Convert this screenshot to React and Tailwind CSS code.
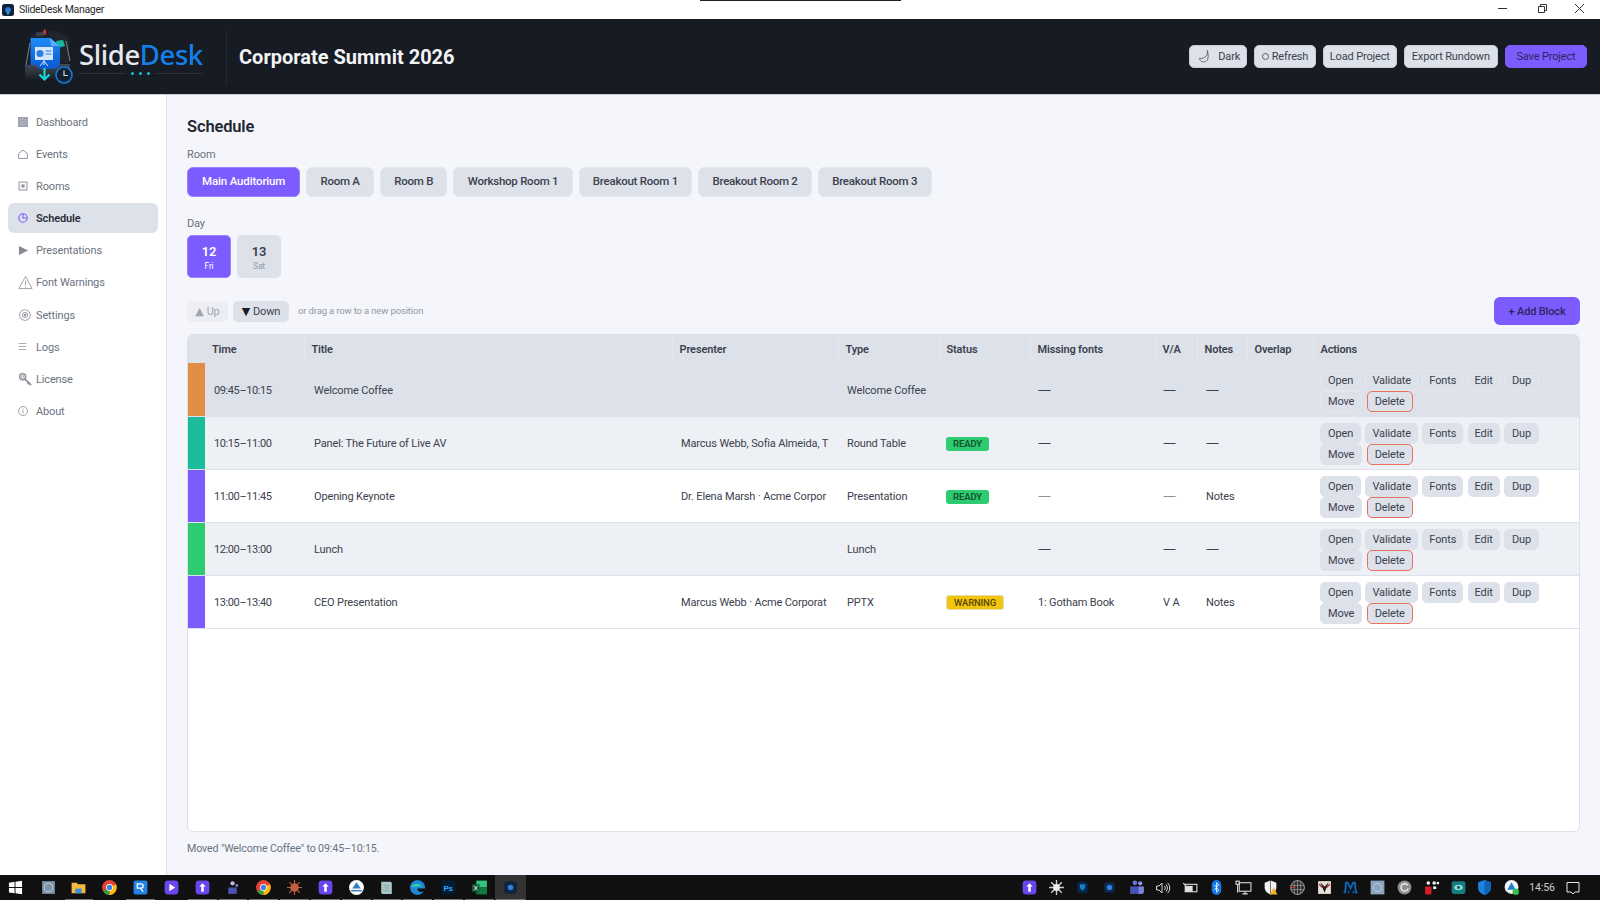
import React from "react";

const FONT = "font-['Roboto','Noto_Sans',sans-serif]";

const Ic = ({ children, c = "w-[14px] h-[14px] -ml-[2px]" }) => (
  <svg viewBox="0 0 16 16" className={c} fill="none" stroke="#8b909c" strokeWidth="1.1">{children}</svg>
);

const NAV = [
  ["Dashboard", <svg viewBox="0 0 12 12" className="w-[10px] h-[10px]"><rect width="12" height="12" fill="#9a9fab" /><path d="M0 3h12M0 6h12M0 9h12M3 0v12M6 0v12M9 0v12" stroke="#b9bdc6" strokeWidth=".6" /></svg>],
  ["Events", <Ic><path d="M3 13V7.5L8 3.5l5 4V13z" /></Ic>],
  ["Rooms", <Ic><rect x="3.5" y="3.5" width="9" height="9" /><rect x="6.2" y="6.2" width="3.6" height="3.6" fill="#8b909c" stroke="none" /></Ic>],
  ["Schedule", <svg viewBox="0 0 16 16" className="w-[14px] h-[14px] -ml-[2px]" fill="none" stroke="#7c5cff" strokeWidth="1.3"><circle cx="8" cy="8" r="4.8" /><path d="M8 3.6V8h4.2" /></svg>],
  ["Presentations", <svg viewBox="0 0 12 12" className="w-[11px] h-[11px]"><path d="M1 1l10 5-10 5z" fill="#858a96" /></svg>],
  ["Font Warnings", <svg viewBox="0 0 16 16" className="w-[15px] h-[15px]" fill="none" stroke="#8b909c" strokeWidth=".9"><path d="M8 1.5L15 14.5H1z" /><path d="M8 6v5M8 12.2v1" /></svg>],
  ["Settings", <svg viewBox="0 0 16 16" className="w-[14px] h-[14px]" fill="none" stroke="#8b909c" strokeWidth=".9"><path d="M8 1.3l1.2 1.6 2-.3.7 1.9 1.9.7-.3 2L15 8l-1.5 1.2.3 2-1.9.7-.7 1.9-2-.3L8 14.7l-1.2-1.2-2 .3-.7-1.9-1.9-.7.3-2L1 8l1.5-1.2-.3-2 1.9-.7.7-1.9 2 .3z" /><circle cx="8" cy="8" r="3" /><circle cx="8" cy="8" r="1.2" fill="#8b909c" /></svg>],
  ["Logs", <svg viewBox="0 0 12 12" className="w-[9px] h-[9px]" fill="none" stroke="#8b909c" strokeWidth="1"><path d="M1 2h10M1 6h10M1 10h10" /></svg>],
  ["License", <svg viewBox="0 0 16 16" className="w-[15px] h-[15px]" fill="none" stroke="#8b909c" strokeWidth="1.2"><circle cx="5" cy="5" r="3.4" fill="#c7cad1" /><path d="M7.5 7.5l6.5 6.5M11.5 11.5l-1.4 1.4" strokeWidth="1.8" /></svg>],
  ["About", <Ic c="w-[12px] h-[12px] -ml-[1px]"><circle cx="8" cy="8" r="6" /><path d="M8 7v4.2M8 4.5v1.2" /></Ic>],
];

const COLS = [17, 99, 368, 166, 101, 91, 125, 42, 50, 66, 268];
const HEAD = ["Time", "Title", "Presenter", "Type", "Status", "Missing fonts", "V/A", "Notes", "Overlap", "Actions"];

const ROWS = [
  { strip: "bg-[#e08e45]", time: "09:45–10:15", title: "Welcome Coffee", who: "", type: "Welcome Coffee", status: "", missing: "—", va: "—", notes: "—", row: "bg-[#dde1ea]", sel: true },
  { strip: "bg-[#1abc9c]", time: "10:15–11:00", title: "Panel: The Future of Live AV", who: "Marcus Webb, Sofia Almeida, T", type: "Round Table", status: "READY", missing: "—", va: "—", notes: "—", row: "bg-[#edf0f5]" },
  { strip: "bg-[#7c5cff]", time: "11:00–11:45", title: "Opening Keynote", who: "Dr. Elena Marsh · Acme Corpor", type: "Presentation", status: "READY", missing: "—", va: "—", notes: "Notes", row: "bg-white", soft: true },
  { strip: "bg-[#2ecc71]", time: "12:00–13:00", title: "Lunch", who: "", type: "Lunch", status: "", missing: "—", va: "—", notes: "—", row: "bg-[#edf0f5]" },
  { strip: "bg-[#7c5cff]", time: "13:00–13:40", title: "CEO Presentation", who: "Marcus Webb · Acme Corporat", type: "PPTX", status: "WARNING", missing: "1: Gotham Book", va: "V A", notes: "Notes", row: "bg-white" },
];

const Act = ({ label, sel, red, tight }) => (
  <button className={`h-[21px] ${tight ? "px-[6px]" : "px-[7px]"} rounded-[5px] border text-[11px] leading-none text-[#3c414d] bg-[#dde1ea] ${red ? "border-[#e8705f]" : sel ? "border-[#e4e7ee]" : "border-[#dde1ea]"}`}>{label}</button>
);

const HBtn = ({ children, primary }) => (
  <button className={`h-[23px] flex items-center gap-[6px] rounded-[5px] px-[6px] text-[11px] leading-none border ${primary ? "bg-[#7c5cff] border-[#7c5cff] text-[#2c2560]" : "bg-[#dde1ea] border-[#c9cdd6] text-[#3c414d]"}`}>{children}</button>
);

const RoomBtn = ({ label, active }) => (
  <button className={`h-[30px] rounded-[6px] border text-[11.5px] font-medium leading-none ${active ? "px-[14px] bg-[#7c5cff] border-[#9880ff] text-white" : "px-[13.25px] tracking-[-0.25px] bg-[#dde1ea] border-[#e4e7ee] text-[#3c414d]"}`}>{label}</button>
);

const Val = ({ v, soft }) =>
  v === "—" ? (
    <span className={`text-[13px] leading-none tracking-normal font-['Noto_Sans',sans-serif] ${soft ? "text-[#8b909c]" : ""}`}>—</span>
  ) : (
    <span>{v}</span>
  );

const Logo = () => (
  <svg viewBox="0 0 48 55" className="w-[48px] h-[55px] shrink-0">
    <defs>
      <linearGradient id="docg" x1="0" y1="0" x2="0" y2="1"><stop offset="0" stopColor="#1f8df6" /><stop offset="1" stopColor="#0a57d0" /></linearGradient>
      <linearGradient id="trayg" x1="0" y1="0" x2="0" y2="1"><stop offset="0" stopColor="#444a55" /><stop offset="1" stopColor="#14171d" /></linearGradient>
    </defs>
    <path d="M6 6 L30 1 L44 8 L44 34 L6 34z" fill="#20242d" />
    <rect x="11" y="3" width="9" height="4" rx="1" fill="#39404c" transform="rotate(-8 15 5)" />
    <rect x="18.5" y="0.5" width="2.5" height="5" rx="1" fill="#d8322f" />
    <path d="M31 12l7-1 2 6-7 2z" fill="#17b8a0" />
    <path d="M5.5 9 H25 L35 17 V40 H5.500z" fill="url(#docg)" />
    <path d="M25 9 L35 17 H26 z" fill="#59aef9" />
    <path d="M1 36 L5 14 M41 12 L45 32" stroke="#70767f" strokeWidth="1.2" fill="none" />
    <rect x="10" y="18" width="18" height="13" fill="#d3e6fb" />
    <circle cx="15" cy="24.500" r="3.600" fill="#2b7fe0" />
    <path d="M20.500 22h6M20.500 25h6" stroke="#2b7fe0" strokeWidth="1.200" />
    <path d="M19 31v5M19 32l-4 5M19 32l4 5" stroke="#d3e6fb" strokeWidth="1" fill="none" />
    <path d="M0 36 H11 Q13 40 17 40 H27 Q33 40 35 35 H45 V46 Q45 53 38 53 H6 Q0 53 0 46z" fill="url(#trayg)" />
    <path d="M19.500 39v11M14.500 45.500l5 5 5-5" stroke="#19d3d6" strokeWidth="2.200" fill="none" />
    <circle cx="39" cy="46" r="8" fill="#13202e" stroke="#1379d8" strokeWidth="1.600" />
    <path d="M39 41.500V46.500h4" stroke="#d5dbe4" strokeWidth="1.200" fill="none" />
  </svg>
);

const S = ({ children }) => <svg viewBox="0 0 16 16" className="w-[17px] h-[17px]">{children}</svg>;
const Purple = ({ arrow }) => (
  <S>
    <rect x="1.5" y="1.5" width="13" height="13" rx="3.2" fill="#6a45f0" />
    {arrow ? <path d="M6 4.5l5.5 3.5L6 11.5z" fill="#fff" /> : <path d="M8 4l3 3H9.2v5H6.8V7H5z" fill="#fff" />}
  </S>
);
const Chrome = () => (
  <S>
    <circle cx="8" cy="8" r="7" fill="#e34234" />
    <path d="M8 8 L2 11.6 A7 7 0 0 0 8 15z" fill="#2f9e44" />
    <path d="M8 8 L14 5 A7 7 0 0 1 8 15z" fill="#fbbc05" />
    <circle cx="8" cy="8" r="3.2" fill="#fff" />
    <circle cx="8" cy="8" r="2.5" fill="#3b82e8" />
  </S>
);

const LEFT = [
  [<svg viewBox="0 0 16 16" className="w-[15px] h-[15px]"><path d="M1 2.8l6-.9V7.5H1zM8 1.8l7-1v6.7H8zM1 8.5h6v5.6l-6-.9zM8 8.5h7v6.7l-7-1z" fill="#fff" /></svg>, 0],
  [<S><rect x="2" y="2" width="12" height="12" fill="#7e93a8" /><circle cx="8" cy="8" r="4" fill="none" stroke="#b9c6d2" strokeWidth="1" /></S>, 0],
  [<S><path d="M1.5 3.5h5l1 1.5h7v8.5h-13z" fill="#f5b93d" /><rect x="5" y="9" width="6" height="4.5" fill="#3d8fd8" /></S>, 1],
  [<Chrome />, 0],
  [<S><rect x="1.5" y="1.5" width="13" height="13" rx="1.5" fill="#2383e2" /><path d="M5 4.5h3.5a2 2 0 0 1 0 4H5zM8 8.5l2.5 3.5" stroke="#fff" strokeWidth="1.2" fill="none" /></S>, 1],
  [<Purple arrow />, 0],
  [<Purple />, 1],
  [<S><circle cx="8" cy="4" r="2" fill="#c9b8e8" /><path d="M4 8h8v6H4z" fill="#4a52b5" /><circle cx="12" cy="6" r="1.4" fill="#7b83d9" /></S>, 1],
  [<Chrome />, 1],
  [<S><circle cx="8" cy="8" r="4" fill="#c2603d" /><path d="M8 1v14M1 8h14M3 3l10 10M13 3L3 13" stroke="#c2603d" strokeWidth="1" /></S>, 1],
  [<Purple />, 1],
  [<S><circle cx="8" cy="8" r="7" fill="#fff" /><path d="M8 3l4 6H4z" fill="#2e7cc4" /><path d="M3 11h10" stroke="#2e7cc4" strokeWidth="1.4" /></S>, 1],
  [<S><path d="M3 2.5h9l1 1v10.5H4l-1-1z" fill="#a9c7c9" /><path d="M5 6h6M5 8.5h6M5 11h6" stroke="#7b9ea1" strokeWidth=".7" /></S>, 1],
  [<S><path d="M8 1a7 7 0 1 0 6 10.5c-3 1.5-6 .5-6-2.5h7A7 7 0 0 0 8 1z" fill="#1b87d6" /><path d="M2 7c2-3 8-4 10 0H7c-2 0-3 1-5 0z" fill="#2fd1a4" /></S>, 1],
  [<S><rect x="1.5" y="1.5" width="13" height="13" rx="1" fill="#001e36" /><text x="3.2" y="11" fontSize="7.5" fontWeight="700" fill="#31a8ff" fontFamily="Liberation Sans">Ps</text></S>, 1],
  [<S><rect x="5" y="1.5" width="10" height="6.5" fill="#33c481" /><rect x="5" y="8" width="10" height="6.5" fill="#107c41" /><rect x="1" y="5" width="7" height="7" fill="#185c37" /><path d="M3 6.5l3 4M6 6.5l-3 4" stroke="#fff" strokeWidth=".8" /></S>, 1],
  [<S><rect x="2" y="2" width="12" height="12" rx="3" fill="#10233f" /><circle cx="8" cy="8" r="2.6" fill="#2f7fe0" /></S>, 2],
];

const RIGHT = [
  <Purple />,
  <S><path d="M8 1v14M1 8h14M3 3l10 10M13 3L3 13" stroke="#cfcfcf" strokeWidth="1.3" /><circle cx="8" cy="8" r="3.2" fill="#eee" /></S>,
  <S><rect x="3" y="2.5" width="10" height="11" rx="3" fill="#07274a" /><path d="M5.5 5h5v3.5L8 11 5.5 8.5z" fill="#1a7fc9" /></S>,
  <S><rect x="3" y="3" width="10" height="10" rx="2" fill="#10264a" /><circle cx="8" cy="8" r="2.6" fill="#2f7fe0" /></S>,
  <S><circle cx="11.5" cy="4" r="2" fill="#8f97e6" /><circle cx="6.5" cy="3.6" r="2.2" fill="#6a72d8" /><path d="M2 7h9v7H2z" fill="#4a52b5" /><path d="M10 7h5v5a2 2 0 0 1-2 2h-3z" fill="#7b83d9" /></S>,
  <svg viewBox="0 0 16 16" className="w-[16px] h-[16px]" fill="none" stroke="#d8d8d8" strokeWidth="1"><path d="M1.5 6h2.5l3-3v10l-3-3H1.5zM9.5 6a3 3 0 0 1 0 4M11 4.5a5 5 0 0 1 0 7M12.7 3a7 7 0 0 1 0 10" /></svg>,
  <svg viewBox="0 0 16 16" className="w-[17px] h-[17px]" fill="none" stroke="#e2e2e2" strokeWidth="1"><rect x="3" y="5" width="11" height="7" /><rect x="3.5" y="7" width="6" height="4.5" fill="#e2e2e2" /><path d="M1 4l3 2" /></svg>,
  <S><rect x="3.5" y="1" width="9" height="14" rx="4.5" fill="#1477e6" /><path d="M6 5.5l4 5L8 12.5v-9l2 2-4 5" stroke="#fff" strokeWidth=".8" fill="none" /></S>,
  <svg viewBox="0 0 16 16" className="w-[17px] h-[17px]" fill="none" stroke="#dedede" strokeWidth="1"><rect x="4" y="3.5" width="11" height="8" /><rect x="1" y="2" width="3" height="3" /><path d="M2.5 5v8M7 14h5M9.5 11.5V14" /></svg>,
  <S><path d="M8 1.5l5.5 2V8c0 3-2.3 5.500-5.500 6.500C4.800 13.500 2.500 11 2.500 8V3.500z" fill="#f2f2f2" /><path d="M8 1.500v13" stroke="#333" strokeWidth=".6" /><path d="M11 8l3.500 6.500h-7z" fill="#f0b429" /></S>,
  <S><circle cx="8" cy="8" r="6.500" fill="#2a2a2a" stroke="#bbb" strokeWidth=".8" /><path d="M2 6h12M2 10h12M8 1.500v13M5 2.500v11M11 2.500v11" stroke="#c4c4c4" strokeWidth=".5" /><path d="M1 8h5" stroke="#d23b3b" strokeWidth="1" /></S>,
  <S><rect x="2" y="2" width="12" height="12" fill="#e8e2d8" /><path d="M4 3l4 10 4-10-4 4z" fill="#222" /><path d="M3 5l3 3M13 5l-3 3" stroke="#b23" strokeWidth="1.2" /></S>,
  <svg viewBox="0 0 16 16" className="w-[17px] h-[17px]"><path d="M1.500 12.500h1.500l.8-9h1.700L8 9l2.500-5.500h1.700l.8 9H14.500M7 12.500H5.500M11.500 12.500h-1.500" stroke="#0d64b8" strokeWidth="1.800" fill="none" /></svg>,
  <S><rect x="1.500" y="1.500" width="13" height="13" fill="#8ca5bf" /><circle cx="8" cy="8" r="3.800" fill="none" stroke="#b6c7d8" strokeWidth="1" /></S>,
  <S><circle cx="8" cy="8" r="6.500" fill="#8e8e8e" /><path d="M11 6a3.500 3.500 0 1 0 .5 3" stroke="#eee" strokeWidth="1.300" fill="none" /></S>,
  <S><rect x="2" y="7" width="6" height="7.500" rx="1" fill="#d91c2a" /><circle cx="5" cy="3.800" r="1.700" fill="#f3f3f3" /><circle cx="10.500" cy="3.800" r="1.700" fill="#f3f3f3" /><circle cx="14" cy="3.800" r="1.300" fill="#f3f3f3" /><rect x="9.500" y="7" width="3" height="2.500" fill="#f3f3f3" /></S>,
  <S><rect x="1.500" y="2" width="13" height="12" rx="2" fill="#157c7f" /><ellipse cx="8" cy="8" rx="4" ry="2.500" fill="#8ed8d6" /><circle cx="8" cy="8" r="1.300" fill="#0f4f52" /></S>,
  <S><path d="M8 1l6 2v5.500c0 3-2.500 5.500-6 6.500-3.500-1-6-3.500-6-6.500V3z" fill="#1a83e0" /><path d="M8 1l6 2v5.500c0 3-2.500 5.500-6 6.500z" fill="#0f63b5" /></S>,
  <S><circle cx="8" cy="7.500" r="6.500" fill="#f2f6fa" /><path d="M8 3l4 7H4z" fill="#1c7fd1" /><circle cx="12" cy="12" r="3" fill="#35c24b" /></S>,
];

export default function App() {
  return (
    <div className={`relative w-[1600px] h-[900px] overflow-hidden flex flex-col bg-white tracking-[-0.15px] ${FONT}`}>
      <div className="absolute top-0 left-[700px] w-[201px] h-px bg-[#222]" />
      {/* title bar */}
      <div className="h-[19px] shrink-0 flex items-center bg-white pl-[2px]">
        <svg viewBox="0 0 12 12" className="w-[12px] h-[12px]"><rect width="12" height="12" rx="2.5" fill="#14233a" /><circle cx="6" cy="6" r="2.8" fill="#2f7fe0" /><rect x="5.2" y="8" width="1.6" height="2.5" fill="#19d3d6" /></svg>
        <span className="ml-[5px] pt-[2px] text-[10.5px] tracking-[-0.3px] leading-none text-[#2b2b2b]">SlideDesk Manager</span>
        <div className="ml-auto flex items-center pr-[2px]">
          <svg viewBox="0 0 38 19" className="w-[38px] h-[19px]"><path d="M14 8.500h9" stroke="#333" /></svg>
          <svg viewBox="0 0 38 19" className="w-[38px] h-[19px]" fill="none" stroke="#333"><path d="M16.500 6.500h6v6h-6zM18.500 6.500V4.500h6v6h-2" /></svg>
          <svg viewBox="0 0 38 19" className="w-[38px] h-[19px]" fill="none" stroke="#333"><path d="M15 4l9 9M24 4l-9 9" /></svg>
        </div>
      </div>

      {/* header */}
      <header className="h-[76px] shrink-0 flex items-center bg-[#171b24] border-b border-[#c9cdd6] pl-[25px] pr-[13px]">
        <Logo />
        <div className="ml-[6px] w-[123px] flex flex-col font-['Noto_Sans',sans-serif]">
          <div className="pt-[1px] text-[27.5px] leading-[34px] font-medium tracking-[-0.4px] whitespace-nowrap">
            <span className="text-[#e6e8ec]">Slide</span><span className="text-[#1480ea]">Desk</span>
          </div>
          <div className="flex items-center mb-[2px]">
            <span className="h-px w-[47px] bg-[#2b303a]" />
            <span className="mx-auto flex gap-[5px]">
              <i className="w-[3px] h-[3px] bg-[#12c2cf] rounded-full" />
              <i className="w-[3px] h-[3px] bg-[#12c2cf] rounded-full" />
              <i className="w-[3px] h-[3px] bg-[#12c2cf] rounded-full" />
            </span>
            <span className="h-px w-[47px] bg-[#2b303a]" />
          </div>
        </div>
        <div className="ml-[24px] w-px h-[54px] bg-[#242934]" />
        <h1 className="ml-[12px] text-[20px] font-bold tracking-normal text-[#f2f3f5] whitespace-nowrap">Corporate Summit 2026</h1>
        <div className="ml-auto flex items-center gap-[7px]">
          <HBtn><svg viewBox="0 0 16 16" className="w-[15px] h-[15px] ml-[1px]" fill="none" stroke="#5b606b" strokeWidth="1"><path d="M11 1.500c1 5-2 9-8.500 8.500 1 3.500 4 4.500 6.500 3.500s4-5 2-12z" /></svg><span>Dark</span></HBtn>
          <HBtn><span className="px-[0.5px] flex items-center gap-[3px]"><span className="w-[7px] h-[7px] rounded-full border border-[#5b606b]" />Refresh</span></HBtn>
          <HBtn>Load Project</HBtn>
          <HBtn><span className="px-[1px]">Export Rundown</span></HBtn>
          <HBtn primary><span className="px-[4.5px]">Save Project</span></HBtn>
        </div>
      </header>

      <div className="flex-1 min-h-0 flex">
        {/* sidebar */}
        <aside className="w-[167px] shrink-0 bg-white border-r border-[#dde1ea] px-[8px] pt-[11.5px] flex flex-col gap-[2.2px]">
          {NAV.map(([label, icon]) => {
            const active = label === "Schedule";
            return (
              <div key={label} className={`h-[30px] flex items-center rounded-[6px] pl-[10px] ${active ? "bg-[#dde1ea] text-[#2c303a] font-semibold" : "text-[#6b7280]"}`}>
                <span className="w-[18px] shrink-0 flex items-center justify-start">{icon}</span>
                <span className="pt-px text-[11px] leading-none whitespace-nowrap">{label}</span>
              </div>
            );
          })}
        </aside>

        {/* main */}
        <main className="flex-1 min-w-0 bg-[#f4f6fb] flex flex-col px-[20px] pt-[20px] pb-[18px]">
          <h2 className="text-[16.5px] leading-[24px] font-semibold text-[#23262f]">Schedule</h2>
          <div className="mt-[9px] text-[11px] leading-[14px] text-[#6b7280]">Room</div>
          <div className="mt-[5px] flex gap-[6px]">
            <RoomBtn label="Main Auditorium" active />
            <RoomBtn label="Room A" />
            <RoomBtn label="Room B" />
            <RoomBtn label="Workshop Room 1" />
            <RoomBtn label="Breakout Room 1" />
            <RoomBtn label="Breakout Room 2" />
            <RoomBtn label="Breakout Room 3" />
          </div>
          <div className="mt-[20px] text-[11px] leading-[14px] text-[#6b7280]">Day</div>
          <div className="mt-[4px] flex gap-[6px]">
            <div className="w-[44px] h-[43px] pt-[2px] rounded-[5px] bg-[#7c5cff] border border-[#9880ff] flex flex-col items-center justify-center text-white">
              <span className="text-[13px] leading-[15px] font-semibold">12</span>
              <span className="mt-[2px] text-[8.5px] leading-[11px]">Fri</span>
            </div>
            <div className="w-[44px] h-[43px] pt-[2px] rounded-[5px] bg-[#dde1ea] flex flex-col items-center justify-center text-[#3c414d]">
              <span className="text-[13px] leading-[15px] font-semibold">13</span>
              <span className="mt-[2px] text-[8.5px] leading-[11px] text-[#9499a5]">Sat</span>
            </div>
          </div>
          <div className="mt-[19px] h-[28px] flex items-center">
            <button className="h-[21px] w-[41px] rounded-[5px] bg-[#eceef3] text-[#a0a5b0] text-[11px] leading-none flex items-center justify-center gap-[3px]"><span className="text-[11px] font-['DejaVu_Sans',sans-serif]">▲</span>Up</button>
            <button className="ml-[5px] h-[21px] w-[56px] rounded-[5px] bg-[#dde1ea] text-[#3c414d] text-[11px] leading-none flex items-center justify-center gap-[3px]"><span className="text-[11px] text-[#1b1e26] font-['DejaVu_Sans',sans-serif]">▼</span>Down</button>
            <span className="ml-[9px] text-[9.5px] text-[#9499a5]">or drag a row to a new position</span>
            <button className="ml-auto h-[28px] w-[86px] rounded-[6px] bg-[#7c5cff] text-[#2c2560] text-[11px] font-medium leading-none">+ Add Block</button>
          </div>

          <div className="mt-[9px] flex-1 min-h-0 bg-white border border-[#dde1ea] rounded-[6px] overflow-hidden">
            <table className="w-full table-fixed border-collapse text-left">
              <colgroup>
                {COLS.map((w, i) => <col key={i} style={{ width: w }} />)}
              </colgroup>
              <thead>
                <tr className="h-[28px] bg-[#dde1ea] text-[11px] text-[#3c414d]">
                  <th />
                  {HEAD.map((h, i) => (
                    <th key={h} className={`font-semibold px-[7px] pt-[3px] whitespace-nowrap ${i > 0 ? "border-l border-[#e4e7ee]" : ""}`}>{h}</th>
                  ))}
                </tr>
              </thead>
              <tbody className="text-[11px] text-[#3c414d]">
                {ROWS.map((r) => (
                  <tr key={r.time} className={`h-[53px] border-b border-[#dde1ea] ${r.row}`}>
                    <td className={r.strip} />
                    <td className="pl-[9px] pt-[4px] tracking-[-0.4px]">{r.time}</td>
                    <td className="pl-[10px] pt-[4px]">{r.title}</td>
                    <td className="pl-[9px] pr-[5px] pt-[4px]"><div className="whitespace-nowrap">{r.who}</div></td>
                    <td className="pl-[9px] pt-[4px] whitespace-nowrap">{r.type}</td>
                    <td className="pl-[7px] pt-[3px]">
                      {r.status === "READY" && <span className="inline-block h-[14px] leading-[14px] w-[43px] text-center rounded-[3px] bg-[#2ecc71] text-[#14532d] text-[9.5px] font-semibold">READY</span>}
                      {r.status === "WARNING" && <span className="inline-block h-[15px] leading-[13px] w-[58px] text-center rounded-[3px] bg-[#f1c40f] border border-[#e6dca6] text-[#5a4700] text-[9.5px] font-medium">WARNING</span>}
                    </td>
                    <td className="pl-[8px] pt-[4px] whitespace-nowrap"><Val v={r.missing} soft={r.soft} /></td>
                    <td className="pl-[8px] pt-[4px] whitespace-nowrap"><Val v={r.va} soft={r.soft} /></td>
                    <td className="pl-[9px] pt-[4px] whitespace-nowrap"><Val v={r.notes} /></td>
                    <td />
                    <td className={`pl-[7px] pr-[14px] ${r.sel ? "pt-[4px]" : "pt-[2px]"}`}>
                      <div className="flex flex-wrap gap-x-[4.4px]">
                        <Act label="Open" sel={r.sel} />
                        <Act label="Validate" sel={r.sel} tight />
                        <Act label="Fonts" sel={r.sel} tight />
                        <Act label="Edit" sel={r.sel} tight />
                        <Act label="Dup" sel={r.sel} />
                        <Act label="Move" sel={r.sel} />
                        <Act label="Delete" sel={r.sel} red />
                      </div>
                    </td>
                  </tr>
                ))}
              </tbody>
            </table>
          </div>
          <div className="mt-[9px] text-[10.7px] leading-[16px] text-[#6b7280]">Moved "Welcome Coffee" to 09:45–10:15.</div>
        </main>
      </div>

      {/* taskbar */}
      <footer className="h-[25px] shrink-0 bg-[#101010] flex items-stretch">
        <div className="flex">
          {LEFT.map(([icon, st], i) => (
            <div key={i} className={`relative w-[30.8px] flex items-center justify-center ${st === 2 ? "bg-[#333333]" : ""} ${i === 0 ? "mr-[2px]" : ""}`}>
              {icon}
              {st > 0 && <span className="absolute bottom-0 left-[1px] right-[1px] h-[1px] bg-[#777]" />}
            </div>
          ))}
        </div>
        <div className="ml-auto flex items-center">
          {RIGHT.map((icon, i) => (
            <div key={i} className="w-[26.8px] flex items-center justify-center">{icon}</div>
          ))}
          <span className="ml-[1px] w-[32px] text-center text-[10.5px] text-[#cfcfcf]">14:56</span>
          <span className="w-[30px] flex justify-center">
            <svg viewBox="0 0 16 16" className="w-[16px] h-[16px]" fill="none" stroke="#e8e8e8" strokeWidth="1"><path d="M2 2.500h12v9.500h-4l-2 2-2-2H2z" /></svg>
          </span>
          <span className="w-[12px]" />
        </div>
      </footer>
    </div>
  );
}
